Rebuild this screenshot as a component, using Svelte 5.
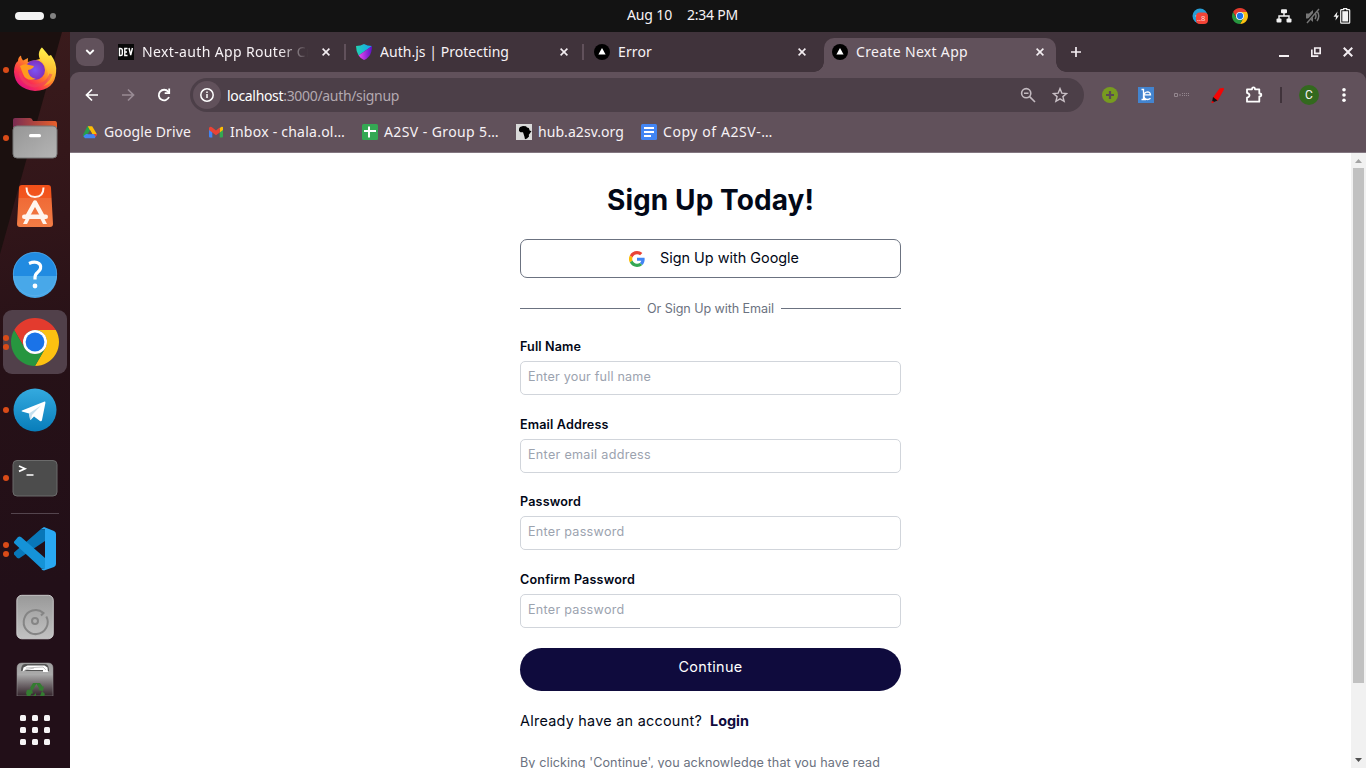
<script>
  // Spreads a label's letters so that it fills the given width.
  function fit(node, width) {
    const natural = node.getBoundingClientRect().width;
    node.style.letterSpacing = `${(width - natural) / node.textContent.length}px`;
  }

  const tabs = [
    { icon: 'dev', title: 'Next-auth App Router Cr', width: 170, clipped: true },
    { icon: 'shield', title: 'Auth.js | Protecting', width: 129 },
    { icon: 'next', title: 'Error', width: 34 },
    { icon: 'next', title: 'Create Next App', width: 112, active: true }
  ];
  const bookmarks = [
    { icon: 'drive', title: 'Google Drive', width: 87 },
    { icon: 'gmail', title: 'Inbox - chala.ol…', width: 115 },
    { icon: 'sheets', title: 'A2SV - Group 5…', width: 115 },
    { icon: 'africa', title: 'hub.a2sv.org', width: 86 },
    { icon: 'docs', title: 'Copy of A2SV-…', width: 110 }
  ];
  const fields = [
    { label: 'Full Name', lw: 61, hint: 'Enter your full name', hw: 123 },
    { label: 'Email Address', lw: 88.5, hint: 'Enter email address', hw: 123 },
    { label: 'Password', lw: 61, hint: 'Enter password', hw: 96.5 },
    { label: 'Confirm Password', lw: 115, hint: 'Enter password', hw: 96.5 }
  ];
  const dock = [
    { icon: 'firefox', dots: 1 }, { icon: 'files', dots: 1 }, { icon: 'store', dots: 0 },
    { icon: 'help', dots: 0 }, { icon: 'chrome', dots: 2, active: true },
    { icon: 'telegram', dots: 1 }, { icon: 'terminal', dots: 1 }, { icon: 'sep' },
    { icon: 'vscode', dots: 2 }, { icon: 'disk', dots: 0 }
  ];
</script>

{#snippet chromeLogo(size)}
  <svg width={size} height={size} viewBox="0 0 48 48">
    <path fill="#e33b2e" d="M24 12H44.78A24 24 0 0 0 3.22 12L13.61 30A12 12 0 0 1 24 12z" />
    <path fill="#fcc111" d="M24 12H44.78A24 24 0 0 1 24 48L34.39 30A12 12 0 0 0 24 12z" />
    <path fill="#27963f" d="M34.39 30L24 48A24 24 0 0 1 3.22 12L13.61 30A12 12 0 0 0 34.39 30z" />
    <circle cx="24" cy="24" r="12" fill="#fff" /><circle cx="24" cy="24" r="9.4" fill="#1a73e8" />
  </svg>
{/snippet}

{#snippet closeX(size)}
  <svg width={size} height={size} viewBox="0 0 8 8" stroke="#f3edf1" stroke-width="1.6"><path d="M.6.6l6.8 6.8M7.4.6L.6 7.4" /></svg>
{/snippet}

{#snippet favicon(name)}
  <svg width="16" height="16" viewBox="0 0 16 16">
    {#if name === 'dev'}
      <rect width="16" height="16" fill="#090909" />
      <path fill="none" stroke="#fff" stroke-width="1.4" d="M1.5 4.5v7h1q1.8 0 1.8-1.8V6.300q0-1.800-1.800-1.800zM9.500 4.500H6.800v7h2.700M6.800 8h2.200M11 4l1.700 7 1.700-7" />
    {:else if name === 'shield'}
      <defs>
        <linearGradient id="sh1" x2="1"><stop stop-color="#22d3b0" /><stop offset="1" stop-color="#159ff5" /></linearGradient>
        <linearGradient id="sh2" x2="1"><stop stop-color="#ec4af0" /><stop offset="1" stop-color="#5b10c8" /></linearGradient>
      </defs>
      <path fill="url(#sh1)" d="M0 2Q5 2 8 0q3 2 8 2L2.600 11.500Q0 7 0 2z" />
      <path fill="url(#sh2)" d="M16 2q0 7-3.200 10.600Q11 15 8 16 5 15 2.600 11.500z" />
    {:else if name === 'next'}
      <circle cx="8" cy="8" r="8" fill="#000" /><path fill="#fff" d="M8 4l3.600 6.500H4.400z" />
    {:else if name === 'drive'}
      <path fill="#27a04c" d="M5.400 2.200h2.700l2 3.500-5.500 8.400H2.300L1 11z" />
      <path fill="#fcbc05" d="M5.800 2.200h4.400l4.900 8.200H10.300z" />
      <path fill="#4285f4" d="M4.100 10h11L12.800 14.200H3.100L1.400 12.300z" />
      <path fill="#61515b" d="M8 6l2.400 4.300H5.600z" /><path fill="#ea4335" d="M11.800 10h3.300l-1.500 3z" />
    {:else if name === 'gmail'}
      <path fill="#4285f4" d="M1 5l3.300 2v6.500H2q-1 0-1-1z" /><path fill="#34a853" d="M15 5l-3.300 2v6.500H14q1 0 1-1z" />
      <path fill="#fbbc05" d="M11.700 4.300Q13 2 15 3v3l-3.300 2.500z" /><path fill="#ea4335" d="M1 6V4q1-2 3.300-.6L8 6.600l3.700-3.100v5L8 11.200 4.300 8.500z" />
    {:else if name === 'sheets'}
      <rect width="16" height="16" rx="1.500" fill="#34a853" /><path stroke="#fff" stroke-width="2" d="M2 7h12M7 2.500v11" />
    {:else if name === 'africa'}
      <rect width="16" height="16" fill="#d9d9d9" />
      <path d="M4 3l3-1 3 .3 1 1.200 1.800.5 1 2.700 1.700.4-1.700 2.300-1 1.300.2 1.800-2 2L9 15.300 8.400 12.500l-.8-2.400L7 8.300H4.500L3 7V4.700z" />
    {:else if name === 'docs'}
      <rect width="16" height="16" rx="1.500" fill="#4285f4" /><path stroke="#fff" stroke-width="2" d="M3 4h10M3 8h10M3 12h7" />
    {/if}
  </svg>
{/snippet}

{#snippet dockIcon(name)}
  {#if name === 'chrome'}
    {@render chromeLogo(48)}
  {:else}
    <svg width="48" height="48" viewBox="0 0 48 48">
      {#if name === 'firefox'}
        <defs>
          <linearGradient id="ff1" x1=".9" y1=".1" x2=".25" y2=".95"><stop stop-color="#fff34f" /><stop offset=".3" stop-color="#ffc52c" /><stop offset=".55" stop-color="#ff7a2a" /><stop offset=".8" stop-color="#fb3150" /><stop offset="1" stop-color="#e2127e" /></linearGradient>
          <radialGradient id="ff2"><stop stop-color="#7a55f5" /><stop offset="1" stop-color="#8031bd" /></radialGradient>
          <linearGradient id="ff3" x2="0" y2="1"><stop stop-color="#fff44c" /><stop offset="1" stop-color="#ff9a25" /></linearGradient>
        </defs>
        <path fill="url(#ff1)" d="M10 9.500q0 3 2 5l5-2.500-.2 4L29 13q-3-5 2-11.500Q35 6 38 10l2-1q6 8 5.100 17Q44 44 24 45 4 43 3 26q0-8 4-11 0-4 3-5.500z" />
        <path fill="url(#ff3)" d="M29 13q-3-6 1.500-11.500Q35 7 38 12l1-3q6 9 5.500 16Q43 37 33 40q7-7 3-16-2-6-7-11z" opacity=".8" />
        <circle cx="24" cy="24" r="10" fill="url(#ff2)" />
        <path fill="#ff9a1d" d="M9 20q5-3 9-1l5 1q-1 3-6 4 0 7 8 9-10 3-13-5z" />
        <path fill="none" stroke="#ed4460" stroke-width="3" d="M9 27q3 12 15 13 12-1 16-12" opacity=".55" />
      {:else if name === 'files'}
        <defs><linearGradient id="fo"><stop stop-color="#792c52" /><stop offset="1" stop-color="#e9602b" /></linearGradient>
          <linearGradient id="fg" x2="1" y2="1"><stop stop-color="#969696" /><stop offset="1" stop-color="#b5b5b5" /></linearGradient></defs>
        <path fill="url(#fo)" d="M2 16V6q0-2 2-2h15q2 0 3 3h22q2 0 2 3v10H2z" />
        <rect x="2" y="12" width="44" height="32" rx="4" fill="url(#fg)" stroke="#777" />
        <rect x="18" y="20" width="12" height="3.300" rx="1.500" fill="#fff" />
      {:else if name === 'store'}
        <defs><linearGradient id="st" x2="0" y2="1"><stop stop-color="#f25019" /><stop offset=".3" stop-color="#f2561f" /><stop offset=".31" stop-color="#f06a36" /><stop offset="1" stop-color="#f27d46" /></linearGradient></defs>
        <path fill="url(#st)" d="M11 3h26q3 0 3 3l2 36q0 3-3 3H9q-3 0-3-3L8 6q0-3 3-3z" />
        <path fill="none" stroke="#fff5ef" stroke-width="2" d="M15.500 5.500q0 9.500 8.500 9.500t8.500-9.500" />
        <path fill="none" stroke="#fff5ef" stroke-width="4.400" stroke-linejoin="round" d="M16 35L24 20.500 32 35" />
        <rect x="11" y="32.500" width="26" height="4.500" rx="2.200" fill="#fff5ef" />
        <path fill="#fff5ef" d="M15 36h4l-3 6h-4zM29 36h4l3 6h-4z" />
      {:else if name === 'help'}
        <circle cx="24" cy="24" r="22" fill="#218be1" /><path fill="#48a8e9" d="M2 26h44a22 22 0 0 1-44 0z" />
        <circle cx="24" cy="24" r="21.700" fill="none" stroke="#62b4ed" stroke-width=".6" />
        <path fill="none" stroke="#fff" stroke-width="3.200" d="M18 13.500q4.500-2 8-1 4.500 1.500 3.500 6-.5 2-3 4-2.500 2-2.500 5v2" /><circle cx="24" cy="36" r="2.400" fill="#fff" />
      {:else if name === 'telegram'}
        <defs><linearGradient id="tg" x2="0" y2="1"><stop stop-color="#34aadf" /><stop offset="1" stop-color="#087dba" /></linearGradient></defs>
        <circle cx="24" cy="24" r="21.500" fill="url(#tg)" />
        <path fill="#fff" d="M11 24.500L33 15.700q1.700-.5 1.400 1.300L31 34q-.5 2-2 1l-6-4.500-3 3q-.8.500-1-.6L18 27.500l-7-2q-1-.5 0-1z" /><path fill="#c4dfee" d="M18 27.500l12-8-9 9.500-1 5-1-1z" />
      {:else if name === 'terminal'}
        <rect x="2" y="6.500" width="44" height="35.500" rx="4" fill="#4c4c4c" stroke="#6b6b6b" />
        <path fill="none" stroke="#fff" stroke-width="1.700" d="M8 12l6 2.700-6 2.700M15.500 21H22.500" />
      {:else if name === 'vscode'}
        <path fill="#0877b9" d="M4.500 31L3 29.500v-2L30 4l4 1v11L8 33.500q-2 0-3.500-2.500z" />
        <path fill="#1593d8" d="M4.500 15L7 12q1.500-.8 3 0L34 33v11l-4-1L3 18q-.5-1.500 1.500-3z" />
        <path fill="#29a8f2" d="M33 2l10 4q2 1 2 3v30q0 2-2 3l-10 3.500q-2 0-3-2l4 0V4.500l-4-.5z" />
      {:else if name === 'disk'}
        <defs><linearGradient id="dk" x2="0" y2="1"><stop stop-color="#999" /><stop offset="1" stop-color="#c2c2c2" /></linearGradient></defs>
        <rect x="5.800" y="2.300" width="36.500" height="43.500" rx="5" fill="url(#dk)" stroke="#ddd" stroke-width=".8" />
        <path fill="none" stroke="#858585" stroke-width="2" d="M30 22.500l2.500-2.500A12 12 0 1 0 35.300 23.500" /><circle cx="24" cy="28" r="3" fill="none" stroke="#858585" stroke-width="2" />
      {/if}
    </svg>
  {/if}
{/snippet}

<div class="desktop">
  <header class="panel">
    <div class="spaces"><i class="pill"></i><i class="dot"></i></div>
    <div class="clock"><span use:fit={45}>Aug 10</span><span use:fit={51}>2:34 PM</span></div>
    <div class="tray">
      <svg width="16" height="16" viewBox="0 0 16 16"><circle cx="8" cy="8" r="7.500" fill="#269dd5" /><path fill="#fff" d="M3 8l3-1.500v3z" /><rect x="4" y="4.500" width="12" height="11.500" rx="4" fill="#f44336" /><text x="5" y="13" fill="#ffd8d5" font-size="7.500" font-family="Noto Sans">..8</text></svg>
      <span class="tray-chrome">{@render chromeLogo(16)}</span>
      <svg class="net" width="16" height="16" viewBox="0 0 16 16" fill="#f2f2f2"><rect x="5" y="1.300" width="6" height="4" rx="1" /><rect x=".5" y="10.500" width="5" height="4" rx="1" /><rect x="10.500" y="10.500" width="5" height="4" rx="1" /><path fill="none" stroke="#f2f2f2" stroke-width="1.400" d="M8 5v3M3 11V8h10v3" /></svg>
      <svg class="mute" width="16" height="16" viewBox="0 0 16 16"><path fill="#777" d="M1 5.500h3L8 2v12l-4-3.500H1z" /><path fill="none" stroke="#777" stroke-width="1.500" d="M10 5q2 3 0 6M12 3q3.500 5 0 10" /><path stroke="#131313" stroke-width="2.500" d="M1 15L13 1" /><path stroke="#777" stroke-width="1.400" d="M2 15L14 1" /></svg>
      <svg class="batt" width="18" height="16" viewBox="0 0 18 16"><path fill="#f4f4f4" d="M4.500 3.500L.5 8.800H3l-.5 3.700 3.500-5H3.700z" /><path fill="none" stroke="#f4f4f4" stroke-width="1.200" d="M8.500 1.600h2.200V.7h3v.9h2.200q.8 0 .8.800v12q0 .8-.8.800H8.500q-.8 0-.8-.8v-12q0-.8.800-.8z" /><rect x="9.300" y="3.200" width="5.800" height="10.300" fill="#f4f4f4" /></svg>
    </div>
  </header>

  <div class="below">
    <nav class="dock">
      {#each dock as d}
        {#if d.icon === 'sep'}
          <hr />
        {:else}
          <div class="slot" class:active={d.active}>
            <div class="dots">{#each Array(d.dots) as _}<i></i>{/each}</div>
            <div class="glyph">{@render dockIcon(d.icon)}</div>
          </div>
        {/if}
      {/each}
      <div class="trash">
        <svg width="38" height="34" viewBox="0 0 38 34">
          <defs><linearGradient id="tr" x2="0" y2="1"><stop stop-color="#a0a0a0" /><stop offset=".35" stop-color="#aaa" /><stop offset="1" stop-color="#9b9b9b" stop-opacity=".15" /></linearGradient></defs>
          <path fill="url(#tr)" stroke="#999" stroke-width=".5" d="M1 34V6q0-5 5-5h26q5 0 5 5v28z" />
          <path fill="#555" d="M5 9q0-7 4-7h20q4 0 4 7z" /><path fill="#fff" d="M6.500 9.500l1-4 4-2h17l3 2 .5 4.500H27V8H10z" /><path stroke="#aaa" stroke-width=".7" fill="none" d="M10 6l17-1 3 3M9 8l9-2" />
          <g fill="#347c31"><path d="M14 26l3-5h4l-2 3-2 4zM20 21h4l3 4 1-1-1 5-5-1 1.500-1zM11 28l5-1 1 5-1-1-2 3h-3l-1-3zM26 29l3 3-1 2h-4zM20 31v3h-3z" /></g>
        </svg>
      </div>
      <div class="apps">{#each Array(9) as _}<i></i>{/each}</div>
    </nav>

    <main class="window">
      <div class="tabstrip">
        <button class="search" aria-label="Search tabs"><svg width="10" height="8" viewBox="0 0 10 8" fill="none" stroke="#fff" stroke-width="1.800"><path d="M1.300 2L5 5.700 8.700 2" /></svg></button>
        {#each tabs as t, i}
          <div class="tab" class:on={t.active}>
            {@render favicon(t.icon)}
            <div class="title" class:clipped={t.clipped}><span use:fit={t.width}>{t.title}</span></div>
            <span class="x">{@render closeX(8)}</span>
          </div>
          {#if i < 3}<i class="bar" class:ghost={i === 2}></i>{/if}
        {/each}
        <svg class="plus" width="12" height="12" viewBox="0 0 12 12" stroke="#f3edf1" stroke-width="1.700"><path d="M6 1v10M1 6h10" /></svg>
        <div class="controls">
          <svg width="10" height="10" viewBox="0 0 10 10" stroke="#f5f0f3" stroke-width="2"><path d="M0 9h10" /></svg>
          <svg width="10" height="10" viewBox="0 0 10 10" fill="none" stroke="#f5f0f3" stroke-width="1.700"><path d="M3.800 1h5.400v5.400H3.800zM.8 2.500v6.700h6.500" /></svg>
          {@render closeX(10)}
        </div>
      </div>

      <div class="toolbar">
        <div class="navs">
          <svg width="16" height="16" viewBox="0 0 16 16" fill="none" stroke="#fff" stroke-width="1.700"><path d="M14 8H3M8 2.500L2.500 8 8 13.500" /></svg>
          <svg width="16" height="16" viewBox="0 0 16 16" fill="none" stroke="#998b94" stroke-width="1.700"><path d="M2 8h11M8 2.500L13.500 8 8 13.500" /></svg>
          <svg width="16" height="16" viewBox="0 0 16 16" fill="none" stroke="#fff" stroke-width="1.800"><path d="M13 10A5.300 5.300 0 1 1 12.200 4.700L13.500 6" /><path d="M13.200 1.500V6.200H8.700" /></svg>
        </div>
        <div class="omnibox">
          <span class="info"><svg width="16" height="16" viewBox="0 0 16 16" fill="none" stroke="#fff" stroke-width="1.500"><circle cx="8" cy="8" r="6.200" /><path d="M8 7v4M8 4.500v1.500" /></svg></span>
          <span class="url" use:fit={172}><b>localhost</b>:3000/auth/signup</span>
          <svg class="mag" width="16" height="16" viewBox="0 0 16 16" fill="none" stroke="#c3bac0" stroke-width="1.600"><circle cx="6.200" cy="6.200" r="4.600" /><path d="M9.600 9.600L15 15M4 6.200h4.500" /></svg>
          <svg width="16" height="16" viewBox="0 0 16 16" fill="none" stroke="#c9c0c6" stroke-width="1.400"><path d="M8 1.600l1.800 4.500 4.800.4-3.700 3.100 1.200 4.700L8 11.800l-4.100 2.500 1.200-4.700L1.400 6.500l4.800-.4z" /></svg>
        </div>
        <div class="ext">
          <svg width="16" height="16" viewBox="0 0 16 16"><circle cx="8" cy="8" r="8" fill="#779b20" /><path stroke="#5a4a55" stroke-width="2.200" d="M8 4v8M4 8h8" /></svg>
          <svg width="16" height="16" viewBox="0 0 16 16"><rect width="16" height="16" fill="#4384cf" /><path fill="none" stroke="#fff" stroke-width="1.300" d="M3.500 2.500h2v10M3.500 12.500H8M6.500 7.800h6q-.3-3-3-3-3.500.3-3.500 4t3.500 3.700q1.800 0 3-1.200" /></svg>
          <svg width="16" height="16" viewBox="0 0 16 16" fill="none" stroke="#94878f"><path d="M.5 6.500h3v3h-3zM5 8h2" /><path stroke-dasharray="1 1" d="M8 6.500h8M8 8.500h8" /></svg>
          <svg width="16" height="16" viewBox="0 0 16 16"><path fill="#f20505" d="M9.500 1.500l4-.8.500 1.800L7.500 14 3 10.500z" /><path fill="#111" d="M3 10l4.500 3.500-3.500 1.500-2 .2z" /><path fill="#f20505" d="M1.500 14.500l2-.5v2h-2z" /></svg>
          <svg width="18" height="18" viewBox="0 0 18 18" fill="none" stroke="#fff" stroke-width="1.800" stroke-linejoin="round"><path d="M2 3.300h5q0-2 1.500-2t1.500 2h4.300v4.200q2 0 2 1.500t-2 1.500v5.200H2v-4q2.500-.7 2.500-2.400T2 6.900z" /></svg>
        </div>
        <i class="rule"></i>
        <span class="avatar">C</span>
        <svg class="more" width="4" height="16" viewBox="0 0 4 16" fill="#fff"><circle cx="2" cy="2.800" r="1.800" /><circle cx="2" cy="8" r="1.800" /><circle cx="2" cy="13.200" r="1.800" /></svg>
      </div>

      <div class="bookmarks">
        {#each bookmarks as b}
          <div class="bm" class:narrow={b.icon === 'docs'}>{@render favicon(b.icon)}<div class="bt"><span use:fit={b.width}>{b.title}</span></div></div>
        {/each}
      </div>

      <div class="viewport">
        <section class="page">
          <div class="form">
            <h1><span use:fit={207}>Sign Up Today!</span></h1>
            <button class="google">
              <svg width="16" height="16" viewBox="0 0 48 48"><path fill="#ea4335" d="M24 9.500c3.500 0 6.700 1.200 9.200 3.600l6.900-6.900C35.900 2.400 30.500 0 24 0 14.600 0 6.500 5.400 2.600 13.200l8 6.200C12.400 13.700 17.700 9.500 24 9.500z" /><path fill="#4285f4" d="M47 24.500c0-1.600-.2-3.100-.4-4.500H24v9h12.900c-.6 3-2.200 5.500-4.700 7.200l7.700 6C44.400 38 47 31.800 47 24.500z" /><path fill="#fbbc05" d="M10.500 28.600a14.500 14.500 0 0 1 0-9.200l-8-6.200a24 24 0 0 0 0 21.600z" /><path fill="#34a853" d="M24 48c6.500 0 11.900-2.100 15.900-5.800l-7.700-6c-2.200 1.500-4.900 2.300-8.200 2.300-6.300 0-11.600-4.200-13.500-9.900l-8 6.200C6.500 42.600 14.600 48 24 48z" /></svg>
              <span use:fit={139}>Sign Up with Google</span>
            </button>
            <div class="or"><span use:fit={127}>Or Sign Up with Email</span></div>
            {#each fields as f}
              <div class="field">
                <div class="label"><span use:fit={f.lw}>{f.label}</span></div>
                <div class="input"><span use:fit={f.hw}>{f.hint}</span></div>
              </div>
            {/each}
            <button class="continue"><span use:fit={64}>Continue</span></button>
            <p class="login"><span use:fit={182}>Already have an account?</span><strong use:fit={39}>Login</strong></p>
            <p class="terms"><span use:fit={360}>By clicking 'Continue', you acknowledge that you have read</span></p>
          </div>
        </section>
        <div class="scroll">
          <svg width="7" height="4" viewBox="0 0 7 4"><path fill="#a3a3a3" d="M3.500 0L7 4H0z" /></svg>
          <div class="thumb"></div>
          <svg width="7" height="4" viewBox="0 0 7 4"><path fill="#505050" d="M0 0h7L3.500 4z" /></svg>
        </div>
      </div>
    </main>
  </div>
</div>

<style>
  :global(body) { margin: 0; overflow: hidden; }
  .desktop { width: 1366px; height: 768px; overflow: hidden; display: flex; flex-direction: column; font-family: "Noto Sans", sans-serif; font-size: 14px; color: #f7f2f5; }
  .desktop :global(*) { box-sizing: border-box; }
  svg { display: block; flex: none; }
  span, strong { white-space: nowrap; }
  button { border: 0; padding: 0; font: inherit; }
  i { display: block; flex: none; }

  .panel { height: 32px; background: #131313; display: grid; grid-template-columns: 1fr auto 1fr; align-items: center; }
  .spaces { display: flex; align-items: center; gap: 6px; padding-left: 15px; }
  .pill { width: 29px; height: 8px; border-radius: 4px; background: #f4f4f4; }
  .dot { width: 6px; height: 6px; border-radius: 50%; background: #828282; }
  .clock { display: flex; gap: 15px; width: 112px; margin-right: -70px; transform: translateX(-35px); line-height: 30px; height: 32px; }
  .tray { display: flex; justify-content: flex-end; align-items: center; padding-right: 15px; }
  .tray-chrome { margin: 0 28px 0 24px; }
  .mute { margin: 0 12px 0 13px; }

  .below { display: flex; height: 736px; }
  .dock { width: 70px; padding-top: 4px; position: relative; z-index: 0; background: linear-gradient(170deg, #3a1b1c 0%, #311519 26%, #261117 45%, #220f18 75%); }
  .dock::before { content: ""; position: absolute; inset: 0; z-index: -1; background: #1b100f; clip-path: polygon(0 0, 62px 0, 0 222px); }
  .slot { height: 68px; width: 70px; display: flex; align-items: center; }
  .slot.active { background: #51404a; margin: 2px 3px; width: 64px; height: 64px; border-radius: 9px; }
  .slot.active .dots { width: 8px; }
  .dots { width: 11px; padding-left: 3px; display: flex; flex-direction: column; gap: 3px; }
  .slot.active .dots { padding-left: 0; }
  .dots i { width: 6px; height: 6px; border-radius: 50%; background: #d94b18; }
  .glyph { width: 48px; height: 48px; }
  .dock hr { margin: 1px 11px; width: 48px; height: 1px; border: 0; background: #54454e; }
  .trash { display: flex; justify-content: center; padding-top: 11px; height: 46px; overflow: hidden; }
  .apps { display: grid; grid-template-columns: repeat(3, 6px); gap: 6px; justify-content: center; padding-top: 18px; }
  .apps i { width: 6px; height: 6px; border-radius: 1.500px; background: #f6f4f5; }

  .window { flex: 1; display: flex; flex-direction: column; background: #40333b; min-width: 0; }
  .tabstrip { height: 40px; display: flex; align-items: flex-start; padding: 6px 13px 0 6px; }
  .search { width: 28px; height: 28px; border-radius: 9px; background: #61515b; display: grid; place-items: center; margin-right: 6px; }
  .tab { width: 232px; height: 34px; display: flex; align-items: center; padding: 0 12px 6px 8px; position: relative; flex: none; }
  .title { width: 170px; margin-left: 8px; overflow: hidden; line-height: 20px; display: flex; }
  .clipped { width: 166px; margin-right: 4px; mask-image: linear-gradient(90deg, #000 138px, transparent); }
  .x { margin-left: auto; margin-right: 0; }
  .tab.on { background: #61515b; border-radius: 10px 10px 0 0; }
  .tab.on::before, .tab.on::after { content: ""; position: absolute; bottom: 0; width: 10px; height: 10px; }
  .tab.on::before { left: -10px; background: radial-gradient(circle at 0 0, transparent 9.500px, #61515b 10px); }
  .tab.on::after { right: -10px; background: radial-gradient(circle at 100% 0, transparent 9.500px, #61515b 10px); }
  .bar { width: 2px; height: 16px; margin: 6px 2px; background: #61515b; }
  .ghost { visibility: hidden; }
  .plus { margin: 8px 0 0 14px; }
  .controls { margin: 9px 0 0 auto; display: flex; gap: 22px; }

  .toolbar { height: 46px; background: #61515b; border-radius: 9px 9px 0 0; display: flex; align-items: center; padding: 0 20px 0 14px; }
  .navs { display: flex; gap: 20px; margin-right: 18px; }
  .omnibox { width: 894px; height: 34px; border-radius: 17px; background: #4c3f48; display: flex; align-items: center; padding: 0 16px 0 3px; color: #b3a9b0; flex: none; }
  .info { width: 28px; height: 28px; border-radius: 50%; background: #61515b; display: grid; place-items: center; margin-right: 6px; }
  .url b { font-weight: 400; color: #fff; }
  .mag { margin: 0 16px 0 auto; }
  .ext { display: flex; align-items: center; gap: 20px; margin-left: 18px; }
  .ext svg:last-child { margin: 0 -1px; }
  .rule { width: 2px; height: 16px; background: #40333b; margin: 0 17px 0 18px; }
  .avatar { width: 20px; height: 20px; border-radius: 50%; background: #33691e; font: 12px/20px Roboto, sans-serif; text-align: center; margin-right: auto; }

  .bookmarks { height: 35px; background: #61515b; border-bottom: 1px solid #827680; display: flex; gap: 17px; padding: 6px 0 0 12px; }
  .bm { display: flex; height: 16px; align-items: center; gap: 6px; }
  .bt { line-height: 16px; display: flex; }

  .viewport { flex: 1; display: flex; background: #fff; min-height: 0; }
  .page { flex: 1; overflow: hidden; display: flex; justify-content: center; font-family: Inter, sans-serif; color: #020817; }
  .form { width: 381px; padding-top: 25px; }
  h1 { margin: 0; height: 45px; line-height: 45px; font-size: 28px; font-weight: 700; display: flex; justify-content: center; }
  .google { margin-top: 16px; width: 381px; height: 39px; border: 1px solid #6b7280; border-radius: 7px; background: #fff; color: #020817; font-size: 14.400px; display: flex; align-items: center; justify-content: center; gap: 15px; padding-left: 7px; }
  .google span { position: relative; top: -1px; }
  .or { margin-top: 20px; height: 20px; display: flex; align-items: center; gap: 7px; font-size: 12.600px; color: #6b7280; }
  .or::before, .or::after { content: ""; flex: 1; height: 1px; background: #6b7280; }
  .or + .field { margin-top: 20px; }
  .field { margin-bottom: 20.600px; }
  .label { height: 23px; line-height: 18px; font-size: 12.600px; font-weight: 600; display: flex; }
  .input { height: 34px; border: 1px solid #d1d5db; border-radius: 5px; padding-left: 7px; font-size: 12.600px; line-height: 30px; color: #9ca3af; display: flex; }
  .continue { margin-top: 1.500px; width: 381px; height: 43px; border-radius: 22px; background: #0f0b3d; color: #fff; font-size: 14.400px; line-height: 38px; display: flex; justify-content: center; }
  p { margin: 0; display: flex; }
  .login { margin-top: 19px; height: 22px; line-height: 22px; font-size: 14.400px; gap: 8px; }
  .login strong { color: #0f0b3d; }
  .terms { margin-top: 20px; line-height: 22px; font-size: 12.600px; color: #6b7280; }
  .scroll { width: 15px; background: #f1f1f1; display: flex; flex-direction: column; align-items: center; padding: 6px 0; }
  .thumb { width: 11px; height: 515px; margin: 5px 0 auto; background: #c1c1c1; }
</style>
